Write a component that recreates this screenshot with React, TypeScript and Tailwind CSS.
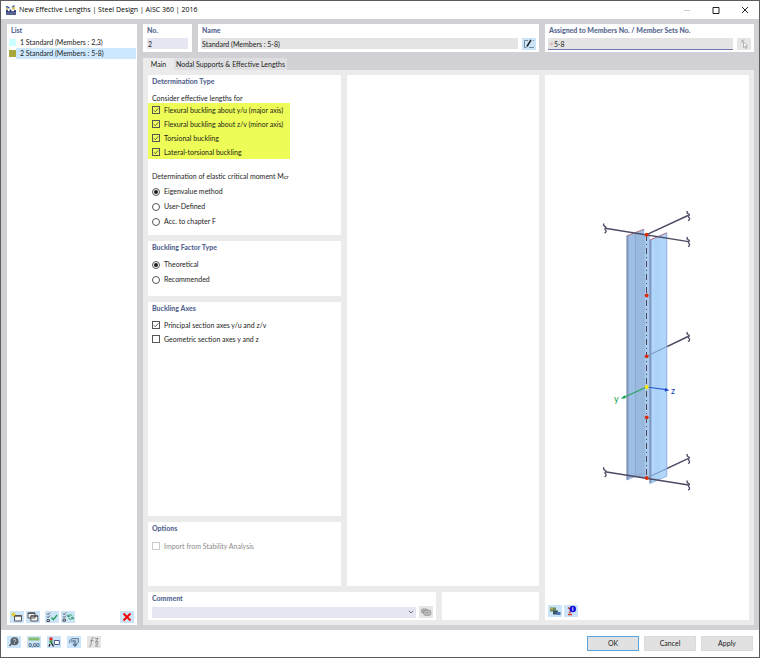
import React, { useState } from "react";
import type { ReactNode } from "react";

function Panel({ title, className = "", children }: { title?: string; className?: string; children?: ReactNode }) {
  return (
    <section className={`flex flex-col bg-white ${className}`}>
      {title && <h2 className="h-3 px-1 text-[7px] leading-3 font-black whitespace-nowrap text-[#566791]">{title}</h2>}
      {children}
    </section>
  );
}

function IconButton({ label, muted = false, children }: { label: string; muted?: boolean; children: ReactNode }) {
  return (
    <button
      type="button"
      aria-label={label}
      className={`flex h-3 w-[14px] shrink-0 items-center justify-center ${muted ? "bg-[#e6e6e6]" : "bg-[#cce4f7]"}`}
    >
      <svg viewBox="0 0 14 12" className="h-3 w-[14px]" fill="none">
        {children}
      </svg>
    </button>
  );
}

function Check({ label, checked = false, disabled = false }: { label: string; checked?: boolean; disabled?: boolean }) {
  return (
    <label className={`flex h-[14px] items-center gap-1 leading-[14px] whitespace-nowrap ${disabled ? "text-[#8c8c8c]" : ""}`}>
      <span className="grid size-2">
        <input
          type="checkbox"
          defaultChecked={checked}
          disabled={disabled}
          className="peer size-2 appearance-none border border-[#555] [grid-area:1/1] disabled:border-[#ccc]"
        />
        <svg viewBox="0 0 8 8" className="pointer-events-none hidden size-2 [grid-area:1/1] peer-checked:block" fill="none">
          <path d="M1.8 4.2 3.3 5.7 6.3 2.3" stroke="#444" strokeWidth="0.8" />
        </svg>
      </span>
      {label}
    </label>
  );
}

function Radio({ label, name, checked = false }: { label: string; name: string; checked?: boolean }) {
  return (
    <label className="flex h-[15px] items-center gap-1 leading-[15px] whitespace-nowrap">
      <span className="grid size-2 place-items-center">
        <input
          type="radio"
          name={name}
          defaultChecked={checked}
          className="peer size-2 appearance-none rounded-full border border-[#555] [grid-area:1/1]"
        />
        <span className="pointer-events-none hidden size-1 rounded-full bg-[#1c1c1c] [grid-area:1/1] peer-checked:block" />
      </span>
      {label}
    </label>
  );
}

function Squiggle({ x, y }: { x: number; y: number }) {
  return (
    <path
      d={`M${x - 1.2} ${y - 4.5}c-1 2.6 0.6 2.6 1.6 3.2c1.6 0.8-1.6 1.8-0.2 3c1.4 1 1.2 2.2-0.6 3.4`}
      stroke="#4d4a63"
      strokeWidth="1.3"
      fill="none"
    />
  );
}

function MemberView() {
  const nodes = [234.7, 295.5, 356.3, 417.3, 478];
  return (
    <svg viewBox="600 206 94 286" className="h-[286px] w-[94px]" role="img" aria-label="Member 3D view">
      <g stroke="#4d4a63" strokeWidth="1.4">
        <path d="M646.7 234.7 688 215.5M646.7 356.3 688 336.5M646.7 478 688 458.7" />
      </g>
      <path d="M626.5 236 644.3 229.3V473L626.5 480Z" fill="#9dbfe5" />
      <path d="M635.5 232.3 650 235V479L635.5 476.5Z" fill="#99b9de" />
      <path d="M645 234 650 235V478.5L645 477.5Z" fill="#a9cbf0" />
      <path d="M650 240 667 233V476L650 483.5Z" fill="#b0d6fc" />
      <path d="M626.5 236H628.6V479.5L626.5 480Z" fill="#8795b8" />
      <path d="M649.3 240H651.4V483L649.3 483.5Z" fill="#8296bd" />
      <path d="M635.4 232.6V476.5" stroke="#7f9cc4" strokeWidth="0.6" />
      <path d="M656 238V481M659 236.5V480" stroke="#9cc1ea" strokeWidth="0.5" />
      <path d="M666.8 233V476.3L650 483.5" stroke="#86a9d6" strokeWidth="0.8" fill="none" />
      <path d="M626.5 480 644 473" stroke="#86a9d6" strokeWidth="0.8" />
      <path d="M626.5 236 644 229.3M650 240 667 232.8" stroke="#b07c92" strokeWidth="1.2" />
      <path d="M646.7 356.3 667 346.6M646.7 478 667 468.5" stroke="#7d9cc4" strokeWidth="1.1" />
      <path d="M605 228.2 688.5 241.6M605 471.8 688.5 485" stroke="#4d4a63" strokeWidth="1.4" />
      <path d="M646.5 235V478" stroke="#4f4658" strokeWidth="1" strokeDasharray="6 3 1 3" />
      <Squiggle x={605} y={228} />
      <Squiggle x={688.5} y={215.5} />
      <Squiggle x={688.5} y={241.5} />
      <Squiggle x={688.5} y={336.5} />
      <Squiggle x={605} y={471.8} />
      <Squiggle x={688.5} y={458.5} />
      <Squiggle x={688.5} y={485} />
      <path d="M646.7 387 624 397.2" stroke="#26a65b" strokeWidth="1.1" />
      <path d="M620.8 398.8 624.6 395.3 625.8 398.2Z" fill="#119d4a" />
      <path d="M646.7 387 666 389.6" stroke="#2b5fd0" strokeWidth="1.1" />
      <path d="M669.3 390.3 665 388 664.7 391.5Z" fill="#1440c8" />
      {nodes.map((y) => (
        <circle key={y} cx="646.7" cy={y} r="1.9" fill="#dc2c08" />
      ))}
      <circle cx="646.7" cy="387" r="2" fill="#ffe600" />
      <text x="614" y="402" fontSize="9" fill="#119d4a">y</text>
      <text x="671" y="394" fontSize="9" fill="#1440c8">z</text>
    </svg>
  );
}

function TitleBar() {
  return (
    <header className="flex h-[18px] items-center bg-white pl-1 text-black">
      <svg viewBox="0 0 12 12" className="size-3" fill="none">
        <path d="M1 10h10M1 8h10M2 8V5.5M5.5 8V5.5M10 8V6" stroke="#23306e" strokeWidth="1.6" />
        <path d="M1 2.5 4.5 4M7 3.5 9.5 1.5" stroke="#3a55a8" strokeWidth="1.4" />
        <circle cx="8.5" cy="4.2" r="1.5" fill="#d8c04a" />
        <circle cx="2.2" cy="4.4" r="1" fill="#d8c04a" />
      </svg>
      <h1 className="ml-[2px] flex-1 font-['Open_Sans',sans-serif] whitespace-nowrap">
        New Effective Lengths | Steel Design | AISC 360 | 2016
      </h1>
      <button type="button" aria-label="Minimize" className="flex h-full w-[29px] items-center justify-center">
        <svg viewBox="0 0 8 8" className="size-2"><path d="M1 4.5H7" stroke="#ccc" /></svg>
      </button>
      <button type="button" aria-label="Maximize" className="flex h-full w-[29px] items-center justify-center">
        <svg viewBox="0 0 8 8" className="size-2"><path d="M1 1.5H7V7.5H1Z" fill="none" stroke="#222" /></svg>
      </button>
      <button type="button" aria-label="Close" className="flex h-full w-[29px] items-center justify-center">
        <svg viewBox="0 0 8 8" className="size-2"><path d="M1 1 7 7M7 1 1 7" stroke="#222" /></svg>
      </button>
    </header>
  );
}

const items = [
  { text: "1 Standard (Members : 2,3)", swatch: "bg-[#ccffff]" },
  { text: "2 Standard (Members : 5-8)", swatch: "bg-[#a9a83c]" },
];

function ListPanel() {
  const [selected, setSelected] = useState(1);
  return (
    <Panel title="List" className="w-[130px] shrink-0">
      <ul className="mt-px flex-1 px-px">
        {items.map((item, i) => (
          <li key={item.text} className="flex h-[11px] items-center pl-px">
            <span className={`size-[7px] shrink-0 ${item.swatch}`} />
            <button
              type="button"
              onClick={() => setSelected(i)}
              className={`h-full flex-1 pl-1 text-left leading-[11px] whitespace-nowrap ${i === selected ? "bg-[#cce8ff]" : ""}`}
            >
              {item.text}
            </button>
          </li>
        ))}
      </ul>
      <div className="flex gap-[2px] px-[3px] pb-[2px]">
        <IconButton label="New">
          <path d="M4.5 4.5h7v5.5h-7z" fill="#f4f4f4" stroke="#444" strokeWidth="0.9" />
          <path d="M4.5 5h7" stroke="#555" strokeWidth="1.4" />
          <path d="M3.5 1v5M1 3.5h5M1.8 1.8l3.4 3.4M5.2 1.8 1.8 5.2" stroke="#e8c820" strokeWidth="0.8" />
        </IconButton>
        <IconButton label="Copy">
          <path d="M2 2h7v5H2zM4.8 4.8h7v5.2h-7z" fill="#f4f4f4" stroke="#444" strokeWidth="0.9" />
          <path d="M2 2.3h7M4.8 5.1h7" stroke="#555" strokeWidth="1.4" />
        </IconButton>
        <span className="w-px" />
        <IconButton label="Select all">
          <path d="M2 2.5 3 3.7 5 1.5M2 5.5 3 6.7 5 4.5M2 8.7h2.5v1.8H2z" stroke="#444" strokeWidth="0.9" />
          <path d="M6.5 6.5 8.4 8.8 12 4" stroke="#1d9a50" strokeWidth="1.3" />
        </IconButton>
        <IconButton label="Invert selection">
          <path d="M2 2.5 3 3.7 5 1.5M2 5.5 3 6.7 5 4.5M2 8.2h2.5v2H2z" stroke="#444" strokeWidth="0.9" />
          <path d="M7 5.2c1-1.8 3.5-1.6 4.5-.2M12 6.8c-1 1.8-3.5 1.6-4.5.2M6.8 3.5v2h2M12.2 8.5v-2h-2" stroke="#2a9d62" />
        </IconButton>
        <span className="flex-1" />
        <IconButton label="Delete">
          <path d="M3.5 2.5 10.5 9.5M10.5 2.5 3.5 9.5" stroke="#f00505" strokeWidth="1.9" />
        </IconButton>
      </div>
    </Panel>
  );
}

function TopRow() {
  return (
    <div className="grid grid-cols-[49px_1fr_209px] gap-[6px]">
      <Panel title="No." className="h-7">
        <input aria-label="No." defaultValue="2" className="mx-1 mt-[2px] h-[11px] w-[41px] bg-[#e6e6f2] pl-px" />
      </Panel>
      <Panel title="Name" className="h-7">
        <div className="mt-[2px] flex gap-1 px-[3px]">
          <input aria-label="Name" defaultValue="Standard (Members : 5-8)" className="h-[11px] min-w-0 flex-1 bg-[#e4e4e4] pl-px" />
          <IconButton label="Edit name">
            <path d="M6 2.5H2.5v7h2M11 2.5h1M7 9.5h5" stroke="#6a7f90" strokeWidth="0.9" />
            <path d="M5 8.5 9 1.8" stroke="#222" strokeWidth="1.5" />
          </IconButton>
        </div>
      </Panel>
      <Panel title="Assigned to Members No. / Member Sets No." className="h-7">
        <div className="mt-[2px] flex gap-1 px-[3px]">
          <div className="flex h-3 min-w-0 flex-1 items-center border-b border-[#7476b4] bg-[#e4e4e4] pl-px">
            <svg viewBox="0 0 4 6" className="h-[6px] w-1" fill="none">
              <path d="M.5 4 3 1.5V4.5" stroke="#d8868c" strokeWidth="0.7" />
            </svg>
            <input aria-label="Assigned members" defaultValue="5-8" className="h-[11px] w-full min-w-0 pl-px" />
          </div>
          <IconButton label="Pick members" muted>
            <path d="M4 1.5 7 4.5M7 1.5 4 4.5" stroke="#999" strokeWidth="0.8" />
            <path d="M6.5 4v5.5l1.4-1.2 1 2.2 1-.5-1-2h1.6z" fill="#fff" stroke="#999" strokeWidth="0.7" />
          </IconButton>
        </div>
      </Panel>
    </div>
  );
}

function MainTab() {
  return (
    <div className="grid flex-1 grid-cols-[193fr_192fr_204fr] grid-rows-[1fr_28px] gap-[6px] bg-[#ebebeb] p-[5px]">
      <div className="flex flex-col gap-[6px]">
        <Panel title="Determination Type" className="pb-[6px]">
          <p className="mt-[5px] h-[11px] px-1 leading-3">Consider effective lengths for</p>
          <div className="w-[142px] bg-[#edfc56] pl-1">
            <Check label="Flexural buckling about y/u (major axis)" checked />
            <Check label="Flexural buckling about z/v (minor axis)" checked />
            <Check label="Torsional buckling" checked />
            <Check label="Lateral-torsional buckling" checked />
          </div>
          <p className="mt-[11px] h-3 px-1 leading-3">
            Determination of elastic critical moment M<span className="text-[6px]">cr</span>
          </p>
          <div className="mt-[2px] px-1">
            <Radio name="moment" label="Eigenvalue method" checked />
            <Radio name="moment" label="User-Defined" />
            <Radio name="moment" label="Acc. to chapter F" />
          </div>
        </Panel>
        <Panel title="Buckling Factor Type" className="pb-[9px]">
          <div className="mt-1 px-1">
            <Radio name="factor" label="Theoretical" checked />
            <Radio name="factor" label="Recommended" />
          </div>
        </Panel>
        <Panel title="Buckling Axes" className="flex-1">
          <div className="mt-1 px-1">
            <Check label="Principal section axes y/u and z/v" checked />
            <Check label="Geometric section axes y and z" />
          </div>
        </Panel>
        <Panel title="Options" className="h-16">
          <div className="mt-[5px] px-1">
            <Check label="Import from Stability Analysis" disabled />
          </div>
        </Panel>
      </div>
      <Panel />
      <Panel className="row-span-2">
        <div className="flex flex-1 items-center justify-center pt-[18px]">
          <MemberView />
        </div>
        <div className="flex gap-[2px] px-[3px] pb-[3px]">
          <IconButton label="Render mode">
            <path d="M2 2.5h6v4H2z" fill="#6c8c5a" />
            <path d="M2 2.5h3v2H2z" fill="#b8a860" />
            <path d="M5 5.5h5v4H5z" fill="#3c5468" />
            <path d="M9 7h3.5v3H9z" fill="#4a78b8" />
          </IconButton>
          <IconButton label="Show information">
            <path d="M4 2.5 7 5 5.5 8M4 9.5h4" stroke="#d03a2a" strokeWidth="1.5" />
            <circle cx="8.8" cy="4" r="3.2" fill="#1212e0" />
            <path d="M8.8 2.2v3.6" stroke="#fff" strokeWidth="0.9" />
          </IconButton>
        </div>
      </Panel>
      <div className="col-span-2 grid grid-cols-[288fr_97fr] gap-[6px]">
        <Panel title="Comment">
          <div className="mt-[2px] flex gap-[3px] pr-[3px] pl-1">
            <div className="grid flex-1 items-center">
              <select aria-label="Comment" className="h-[11px] w-full appearance-none bg-[#e6e6f2] [grid-area:1/1]">
                <option></option>
              </select>
              <svg viewBox="0 0 6 4" className="pointer-events-none mr-[2px] h-1 w-[6px] justify-self-end [grid-area:1/1]" fill="none">
                <path d="M.8.8 3 3 5.2.8" stroke="#666" strokeWidth="0.9" />
              </svg>
            </div>
            <IconButton label="Comment library" muted>
              <rect x="2" y="2.5" width="7" height="5" rx="1.5" fill="#aaa" />
              <rect x="4.8" y="4.3" width="7" height="5" rx="1.5" fill="#c4c4c4" stroke="#8a8a8a" strokeWidth="0.8" />
              <path d="M6.5 6.8h3.5" stroke="#888" strokeWidth="0.8" />
            </IconButton>
          </div>
        </Panel>
        <Panel />
      </div>
    </div>
  );
}

function BottomBar() {
  const button = "h-[15px] w-[52px] text-center leading-[13px]";
  return (
    <footer className="flex h-[27px] items-start gap-[6px] bg-white pt-[6px] pr-[6px] pl-[6px]">
      <IconButton label="Help">
        <circle cx="7.5" cy="5.3" r="4" fill="#56606a" />
        <path d="M4.5 7.5 2.5 10" stroke="#56606a" strokeWidth="1.6" />
        <path d="M6.2 4.4c0-1.6 2.7-1.5 2.6 0 0 .9-1.3 1-1.3 2M7.5 7.2v.8" stroke="#e6eef5" strokeWidth="0.8" />
      </IconButton>
      <IconButton label="Units">
        <path d="M1.5 1.5h11v3h-11z" fill="#86bd70" />
        <text x="1.4" y="10.6" fontSize="5.6" fontWeight="bold" fill="#2e4a66">0,00</text>
      </IconButton>
      <IconButton label="Display options">
        <path d="M2.5 1.5h3v3h-3z" fill="#e02020" />
        <path d="M2.5 4.5h3v2.5h-3z" fill="#33a04a" />
        <path d="M3 8 2 10.5M4.5 7 6.5 10.5" stroke="#222" strokeWidth="1.3" />
        <path d="M7.3 4.5h5v4h-5z" fill="#fff" stroke="#334a88" strokeWidth="0.9" />
      </IconButton>
      <IconButton label="Apply view">
        <path d="M2.5 7V4.5L5 2.5h6.5v4L9 8.5" fill="#b8cbdc" stroke="#6a88a6" />
        <path d="M4 5h4v5M6 8.2 8 10.3 10 8.2" stroke="#44688c" strokeWidth="1.1" />
      </IconButton>
      <IconButton label="Formula" muted>
        <path d="M7 1.8c-1.6-.6-2 .6-2.3 2.2L3.8 9c-.3 1.4-.9 1.6-1.8 1.2M3.3 4.7h3.2M8 2.5h3.2L8.5 5.5h3M8 7h3.2L8.5 10h3" stroke="#888" strokeWidth="0.9" />
      </IconButton>
      <div className="ml-auto flex gap-[5px]">
        <button type="button" className={`${button} border border-[#5aa5e0] bg-[#e1e1e1]`}>OK</button>
        <button type="button" className={`${button} border border-[#dadada] bg-[#e1e1e1]`}>Cancel</button>
        <button type="button" className={`${button} border border-[#dadada] bg-[#e1e1e1]`}>Apply</button>
      </div>
    </footer>
  );
}

export default function App() {
  return (
    <div className="flex min-h-screen flex-col border border-[#5c5c5e] bg-white font-[Lato,sans-serif] text-[7px] text-[#1c1c1c]">
      <TitleBar />
      <main className="flex flex-1 gap-[6px] bg-[#d0d0d5] py-[5px] pr-[5px] pl-[6px]">
        <ListPanel />
        <div className="flex min-w-0 flex-1 flex-col">
          <TopRow />
          <div role="tablist" className="mt-[6px] flex h-3 leading-3 whitespace-nowrap">
            <button type="button" role="tab" aria-selected="true" className="w-[31px] bg-[#ebebeb] text-center">Main</button>
            <button type="button" role="tab" aria-selected="false" className="bg-[#dfdfe1] px-[2px]">
              Nodal Supports &amp; Effective Lengths
            </button>
          </div>
          <MainTab />
        </div>
      </main>
      <BottomBar />
    </div>
  );
}
